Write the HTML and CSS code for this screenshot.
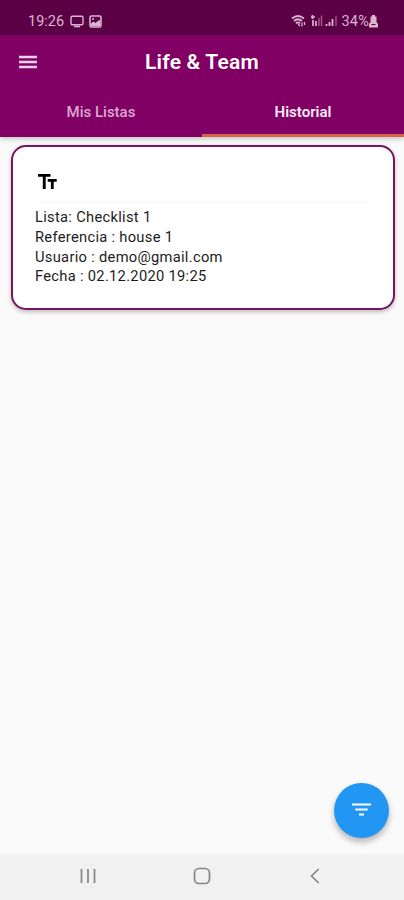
FILE: index.html
```
<!DOCTYPE html>
<html lang="es">
<head>
<meta charset="utf-8">
<title>Life &amp; Team</title>
<link rel="stylesheet" href="styles.css">
</head>
<body>
<div class="status">
  <span class="clock">19:26</span>
  <svg class="cast" width="14" height="13" viewBox="0 0 14 13"><rect x="1" y="1.2" width="12" height="8.6" rx="1.3" fill="none" stroke="currentColor" stroke-width="1.4"/><path d="M4 11.5h6" stroke="currentColor" stroke-width="1.5"/></svg>
  <svg class="photo" width="13" height="13" viewBox="0 0 13 13"><rect x="1" y="1" width="11" height="11" rx="1.5" fill="none" stroke="currentColor" stroke-width="1.6"/><path d="M2 11V8.500l2.500-2 2 1.500L10 5l1 1v5z" fill="currentColor"/><circle cx="4" cy="4" r="1" fill="currentColor"/></svg>
  <span class="space"></span>
  <svg class="signals" width="47" height="14" viewBox="0 0 47 14" fill="none" stroke="currentColor"><path d="M1 4.500Q7-.5 13 4.500M3 7Q7 3.500 11 7M5 9.300Q7 7.500 9 9.300" stroke-width="1.700"/><path d="M7 10l2 2M11 8.500v4M13.500 11V8" stroke-width="1.300"/><path d="M20 3h4M21.500 1v4M22 12V6M25 12V7" stroke-width="1.700"/><path d="M28 12V4M30.500 12V1.500" stroke-width="1.500" opacity=".5"/><path d="M35.500 12v-2M38.500 12V8M41.500 12V5" stroke-width="1.800"/><path d="M45 12V2" stroke-width="1.500" opacity=".45"/></svg>
  <span class="percent">34%</span>
  <svg class="battery" width="9" height="13" viewBox="0 0 9 13" fill="currentColor"><path d="M3 0h3v1.500h1.500V7L9 9v3.500H0V9l1.500-2V1.500H3z"/><path d="M2.500 9.500h4" stroke="#5c0046"/></svg>
</div>
<header class="appbar">
  <div class="titlebar">
    <svg class="menu" width="18" height="14" viewBox="0 0 18 14"><path d="M0 2h18M0 7h18M0 12h18" stroke="currentColor" stroke-width="2.500"/></svg>
    <h1>Life &amp; Team</h1>
  </div>
  <nav class="tabs">
    <span class="tab">Mis Listas</span>
    <span class="tab active">Historial</span>
  </nav>
</header>
<main class="content">
  <article class="card">
    <svg class="type-icon" width="20" height="16" viewBox="0 0 20 16"><path d="M0 0h12.500v2.700H7.700V15H4.800V2.700H0zM9.700 5h9v2.700h-3V15h-2.800V7.700H9.700z"/></svg>
    <div class="details">
      <p>Lista: Checklist 1</p>
      <p>Referencia : house 1</p>
      <p>Usuario : demo@gmail.com</p>
      <p>Fecha : 02.12.2020 19:25</p>
    </div>
  </article>
  <button class="fab" aria-label="Filtrar"><svg width="19" height="14" viewBox="0 0 19 14"><path d="M0 1.500h19M3.300 6.500h12.400M7 11.500h5" stroke="#fff" stroke-width="2.200"/></svg></button>
</main>
<footer class="navbar">
  <svg width="16" height="16" viewBox="0 0 16 16"><path d="M1.500 1v14M8 1v14M14.500 1v14"/></svg>
  <svg class="home" width="18" height="18" viewBox="0 0 18 18"><rect x="1.500" y="1.500" width="15" height="15" rx="4.500"/></svg>
  <svg width="10" height="16" viewBox="0 0 10 16"><path d="M8.700 1L1.500 8l7.200 7"/></svg>
</footer>
</body>
</html>
```
FILE: styles.css
```
* { box-sizing: border-box; }
body {
  margin: 0;
  height: 900px;
  display: flex;
  flex-direction: column;
  overflow: hidden;
  background: #fafafa;
  font-family: Roboto, "Liberation Sans", sans-serif;
}
.status {
  height: 35px;
  padding: 7px 26px 0 28px;
  display: flex;
  align-items: center;
  background: #5c0046;
  color: #d9b5d1;
  font-size: 14.5px;
}
.clock { width: 42px; font-size: 14.5px; }
.photo { margin-left: 5px; }
.space { flex: 1; }
.percent { margin: 0 0 0 3px; letter-spacing: 0.2px; }
.appbar {
  position: relative;
  z-index: 1;
  height: 102px;
  background: #800064;
  box-shadow: 0 2px 5px rgba(0, 0, 0, 0.22);
}
.titlebar {
  height: 54px;
  display: flex;
  align-items: center;
  padding-left: 19px;
}
.menu { color: #edcfe7; }
h1 {
  width: 330px;
  margin: 0;
  text-align: center;
  color: #fff;
  font-size: 21px;
  font-weight: 600;
  letter-spacing: 0.2px;
}
.tabs { height: 48px; display: flex; }
.tab {
  flex: 1;
  padding-top: 2px;
  line-height: 43px;
  text-align: center;
  color: #d9a8d0;
  font-size: 15px;
  font-weight: 500;
  border-bottom: 3px solid transparent;
}
.active { color: #f9eaf6; font-weight: 600; border-color: #d5644b; }
.content { position: relative; flex: 1; padding: 8px 9px 0 10.5px; }
.card {
  height: 165px;
  padding: 27px 24px 0 22.5px;
  background: #fff;
  border: 2px solid #7c1264;
  border-radius: 15px;
  box-shadow: 0 2px 4px rgba(0, 0, 0, 0.25);
}
.type-icon { display: block; margin-left: 2.5px; }
.details {
  margin-top: 12px;
  padding-top: 5px;
  border-top: 1px solid #f8f8f8;
  color: #1c1c1c;
}
.details p { margin: 0; font-size: 14.7px; line-height: 19.8px; letter-spacing: 0.3px; }
.fab {
  position: absolute;
  right: 15px;
  bottom: 16.5px;
  width: 55px;
  height: 55px;
  padding: 0;
  display: flex;
  align-items: center;
  justify-content: center;
  border: 0;
  border-radius: 50%;
  background: #2196f3;
  box-shadow: 0 4px 6px rgba(0, 0, 0, 0.28);
}
.navbar {
  height: 46px;
  padding: 0 84px 2px 80px;
  display: flex;
  align-items: center;
  justify-content: space-between;
  background: #f1f1f1;
  fill: none;
  stroke: #858585;
  stroke-width: 1.7;
}
.home { margin-right: 3px; }
```
